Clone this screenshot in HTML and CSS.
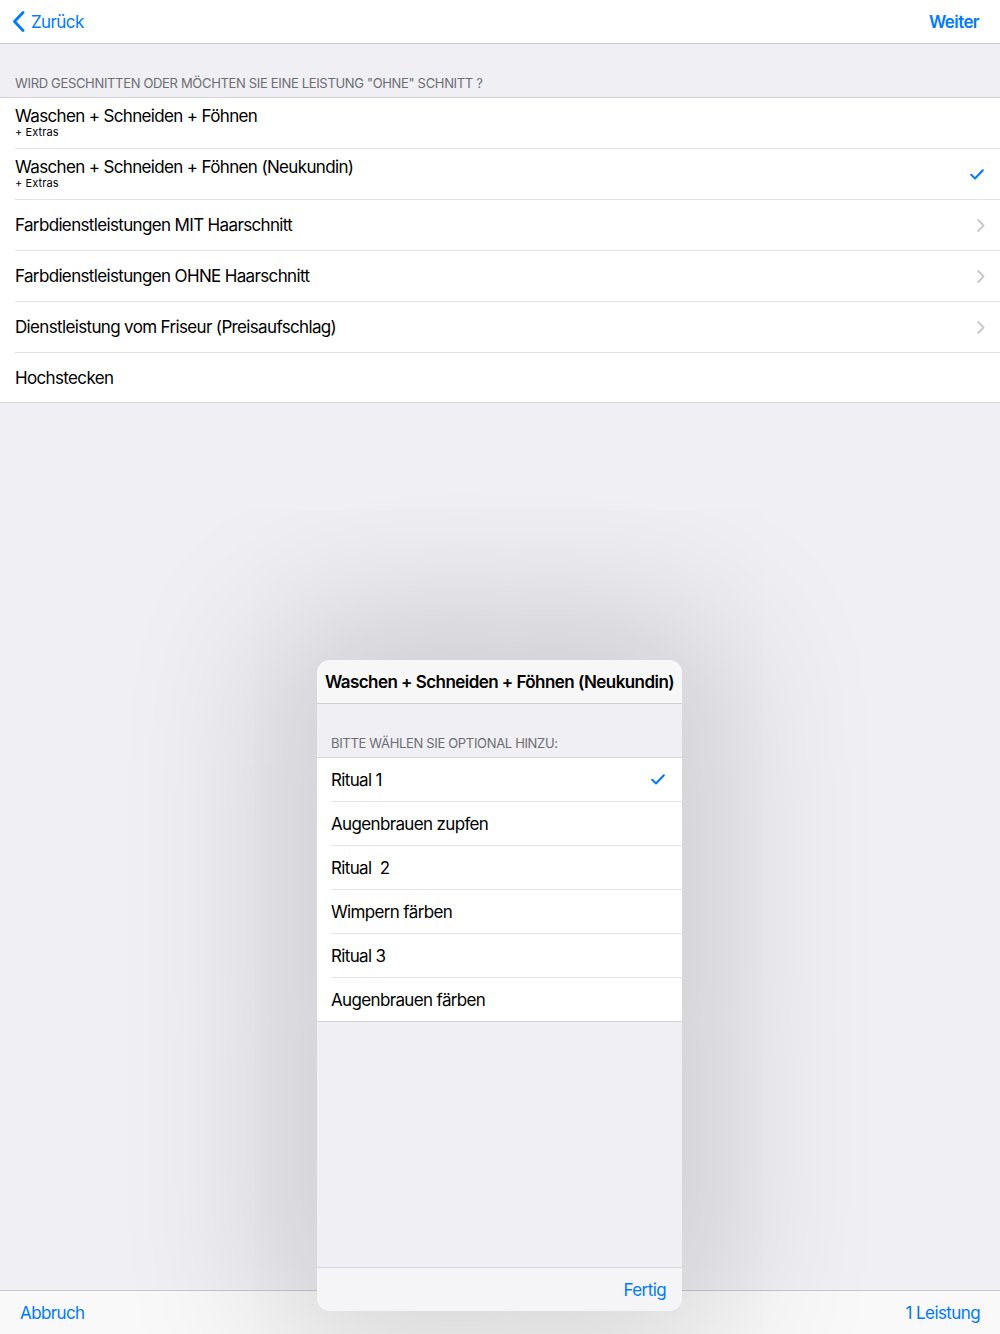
FILE: index.html
```
<!DOCTYPE html>
<html lang="de">
<head>
    <meta charset="UTF-8">
    <meta name="viewport" content="width=device-width, initial-scale=1.0">
    <title>Leistung wählen</title>
    <link rel="stylesheet" href="styles.css">
</head>
<body>
    <div class="screen">
        <header class="navbar">
            <a class="nav-back" href="#">
                <svg width="13" height="21" viewBox="0 0 13 21"><path d="M11 1.5 L2.5 10.5 L11 19.5" fill="none" stroke="#007aff" stroke-width="2.8" stroke-linecap="round" stroke-linejoin="round"/></svg>
                <span>Zurück</span>
            </a>
            <a class="nav-done" href="#">Weiter</a>
        </header>

        <main class="content">
            <div class="section-header">WIRD GESCHNITTEN ODER MÖCHTEN SIE EINE LEISTUNG "OHNE" SCHNITT ?</div>
            <ul class="table">
                <li class="cell cell-sub">
                    <div class="cell-text">
                        <div class="cell-title">Waschen + Schneiden + Föhnen</div>
                        <div class="cell-detail">+ Extras</div>
                    </div>
                </li>
                <li class="cell cell-sub">
                    <div class="cell-text">
                        <div class="cell-title">Waschen + Schneiden + Föhnen (Neukundin)</div>
                        <div class="cell-detail">+ Extras</div>
                    </div>
                    <svg class="check" width="14" height="11" viewBox="0 0 14 11"><path d="M1.2 5.8 L5 9.5 L12.8 1.3" fill="none" stroke="#007aff" stroke-width="2" stroke-linecap="round" stroke-linejoin="round"/></svg>
                </li>
                <li class="cell">
                    <div class="cell-title">Farbdienstleistungen MIT Haarschnitt</div>
                    <svg class="chevron" width="8" height="13" viewBox="0 0 8 13"><path d="M1.2 1 L6.6 6.5 L1.2 12" fill="none" stroke="#c7c7cc" stroke-width="1.8" stroke-linecap="round" stroke-linejoin="round"/></svg>
                </li>
                <li class="cell">
                    <div class="cell-title">Farbdienstleistungen OHNE Haarschnitt</div>
                    <svg class="chevron" width="8" height="13" viewBox="0 0 8 13"><path d="M1.2 1 L6.6 6.5 L1.2 12" fill="none" stroke="#c7c7cc" stroke-width="1.8" stroke-linecap="round" stroke-linejoin="round"/></svg>
                </li>
                <li class="cell">
                    <div class="cell-title">Dienstleistung vom Friseur (Preisaufschlag)</div>
                    <svg class="chevron" width="8" height="13" viewBox="0 0 8 13"><path d="M1.2 1 L6.6 6.5 L1.2 12" fill="none" stroke="#c7c7cc" stroke-width="1.8" stroke-linecap="round" stroke-linejoin="round"/></svg>
                </li>
                <li class="cell">
                    <div class="cell-title">Hochstecken</div>
                </li>
            </ul>
        </main>

        <footer class="toolbar">
            <a href="#">Abbruch</a>
            <a href="#">1 Leistung</a>
        </footer>

        <div class="popover">
            <div class="popover-title">Waschen + Schneiden + Föhnen (Neukundin)</div>
            <div class="popover-body">
                <div class="section-header section-header-small">BITTE WÄHLEN SIE OPTIONAL HINZU:</div>
                <ul class="table">
                    <li class="cell cell-small">
                        <div class="cell-title">Ritual 1</div>
                        <svg class="check" width="14" height="11" viewBox="0 0 14 11"><path d="M1.2 5.8 L5 9.5 L12.8 1.3" fill="none" stroke="#007aff" stroke-width="2" stroke-linecap="round" stroke-linejoin="round"/></svg>
                    </li>
                    <li class="cell cell-small"><div class="cell-title">Augenbrauen zupfen</div></li>
                    <li class="cell cell-small"><div class="cell-title">Ritual&nbsp; 2</div></li>
                    <li class="cell cell-small"><div class="cell-title">Wimpern färben</div></li>
                    <li class="cell cell-small"><div class="cell-title">Ritual 3</div></li>
                    <li class="cell cell-small"><div class="cell-title">Augenbrauen färben</div></li>
                </ul>
            </div>
            <div class="popover-toolbar">
                <a href="#">Fertig</a>
            </div>
        </div>
    </div>
</body>
</html>
```

FILE: styles.css
```
* { box-sizing: border-box; }
body { margin: 0; font-family: Inter, "Noto Sans", sans-serif; color: #000; background: #efeff4; }
a { color: #007aff; text-decoration: none; }
ul { list-style: none; margin: 0; padding: 0; }

.screen { position: relative; width: 1000px; height: 1334px; display: flex; flex-direction: column; overflow: hidden; }

.navbar { height: 44px; flex: none; display: flex; align-items: center; justify-content: space-between; padding: 0 21px 0 12px; background: #fff; border-bottom: 1px solid #c8c7cc; }
.nav-back { display: flex; align-items: center; gap: 6px; font-size: 17px; letter-spacing: -0.6px; }
.nav-back span { margin-top: 1px; }
.nav-done { font-size: 17px; font-weight: 600; letter-spacing: -0.6px; }

.content { flex: 1; }

.section-header { padding: 31px 15px 6px; font-size: 13px; line-height: 16px; color: #6d6d72; letter-spacing: -0.33px; }

.table { background: #fff; border-top: 1px solid #d4d4d8; border-bottom: 1px solid #d4d4d8; }
.cell { position: relative; height: 51px; margin-left: 15px; padding-right: 15px; display: flex; align-items: center; justify-content: space-between; border-bottom: 1px solid #e3e3e6; }
.cell:last-child { border-bottom: none; height: 49px; }
.cell-title { font-size: 17px; letter-spacing: -0.65px; line-height: 20px; }
.cell-text { margin-top: -1px; }
.cell-detail { font-size: 11px; line-height: 13px; letter-spacing: 0.1px; }
.check { margin-right: 1px; }

.toolbar { height: 44px; flex: none; display: flex; align-items: center; justify-content: space-between; padding: 0 20px; background: #f9f9f9; border-top: 1px solid #c8c7cc; font-size: 17px; letter-spacing: -0.6px; }
.toolbar a { margin-top: 1px; }

/* popover floats over the page, its shadow dims the area around it */
.popover { position: absolute; left: 317px; top: 660px; width: 365px; height: 651px; border-radius: 13px; overflow: hidden; display: flex; flex-direction: column; background: #efeff4; box-shadow: 0 0 160px 40px rgba(0, 0, 0, 0.16); z-index: 2; }
.popover-title { height: 44px; flex: none; display: flex; align-items: center; justify-content: center; background: #f7f7f8; border-bottom: 1px solid #cfcfd3; font-size: 17px; font-weight: 600; letter-spacing: -0.55px; }
.popover-body { flex: 1; }
.section-header-small { padding-left: 14px; }
.popover .cell { margin-left: 14px; padding-right: 16px; }
.cell-small { height: 44px; }
.popover .cell:last-child { height: 43px; }
.popover-toolbar { height: 44px; flex: none; display: flex; align-items: center; justify-content: flex-end; padding: 0 16px; background: #f5f5f7; border-top: 1px solid #d8d8dc; font-size: 17px; letter-spacing: -0.6px; }
```
